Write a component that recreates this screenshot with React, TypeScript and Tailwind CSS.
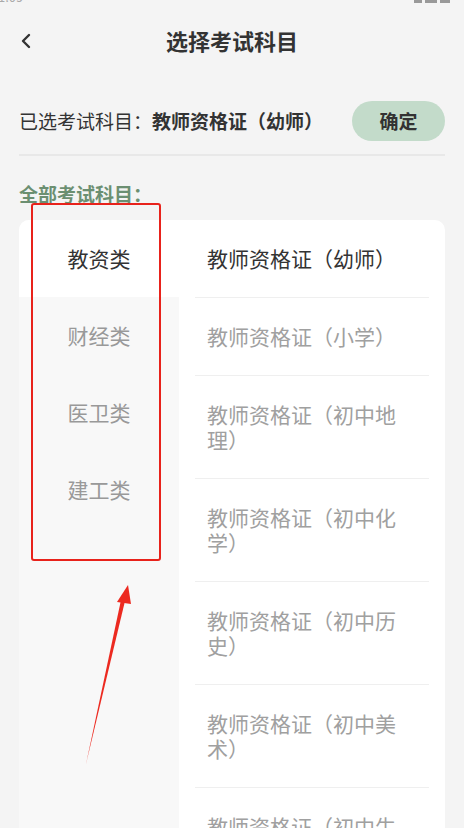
import { ChevronLeft } from 'lucide-react';

const CATEGORIES = ['教资类', '财经类', '医卫类', '建工类'];

const SUBJECTS = [
  '教师资格证（幼师）',
  '教师资格证（小学）',
  '教师资格证（初中地理）',
  '教师资格证（初中化学）',
  '教师资格证（初中历史）',
  '教师资格证（初中美术）',
  '教师资格证（初中生物）',
];

export default function App() {
  return (
    <div
      className="relative h-[828px] w-[464px] overflow-hidden bg-[#f4f4f4] text-[#333]"
      style={{ fontFamily: '"Noto Sans CJK SC", "Noto Sans", sans-serif' }}
    >
      {/* status bar, cut off at the top */}
      <div className="flex h-[3px] items-end justify-between overflow-hidden text-[13px] leading-[13px] text-[#aaa]">
        <span className="-ml-[2px]">1:09</span>
        <span className="mr-[14px] flex items-end gap-[3px]">
          <span className="h-[10px] w-[8px] bg-[#999]" />
          <span className="h-[10px] w-[12px] bg-[#999]" />
          <span className="h-[10px] w-[10px] bg-[#999]" />
        </span>
      </div>

      <header className="relative flex h-[75px] items-center justify-center">
        <button className="absolute left-[14px] top-[26px] text-[#333]" aria-label="Back">
          <ChevronLeft className="h-[24px] w-[24px]" strokeWidth={2.4} />
        </button>
        <h1 className="text-[22px] font-bold">选择考试科目</h1>
      </header>

      <div className="mx-[19px] mt-[23px] flex items-center justify-between">
        <p className="text-[19px] leading-[40px]">
          已选考试科目：<span className="font-bold">教师资格证（幼师）</span>
        </p>
        <button className="h-[40px] w-[93px] rounded-full bg-[#c3dbca] text-[19px] font-bold text-[#333]">
          确定
        </button>
      </div>

      <div className="mx-[19px] mt-[13px] h-[2px] bg-[#e8e8e8]" />

      <p className="mx-[19px] mt-[27px] text-[19px] font-semibold leading-[22px] text-[#6b8f71]">全部考试科目：</p>

      <div className="mx-[19px] mt-[15px] flex h-[620px] overflow-hidden rounded-[10px] bg-white">
        <div className="flex w-[160px] flex-col bg-[#f8f8f8]">
          {CATEGORIES.map((c, i) => (
            <div
              key={c}
              className={
                i === 0
                  ? 'flex h-[77px] items-center justify-center bg-white text-[21px] text-[#333]'
                  : 'flex h-[77px] items-center justify-center text-[21px] text-[#999]'
              }
            >
              {c}
            </div>
          ))}
        </div>
        <div className="flex flex-1 flex-col px-[16px]">
          {SUBJECTS.map((s, i) => (
            <div
              key={s}
              className={
                i === 0
                  ? 'border-b border-[#efefef] py-[26px] pl-[12px] text-[21px] leading-[25px] text-[#333]'
                  : 'border-b border-[#efefef] py-[26px] pl-[12px] text-[21px] leading-[25px] text-[#a0a0a0]'
              }
            >
              <div className="w-[196px]">{s}</div>
            </div>
          ))}
        </div>
      </div>

      {/* annotation: red box + arrow */}
      <div className="absolute left-[31px] top-[203px] h-[358px] w-[130px] rounded-[3px] border-2 border-[#e8221b]" />
      <svg className="absolute left-0 top-0" width="464" height="828" viewBox="0 0 464 828">
        <polygon points="86,764 121,600 125,601" fill="#ec2a20" />
        <polygon points="128,585 117,602 131,604" fill="#ec2a20" />
      </svg>
    </div>
  );
}
